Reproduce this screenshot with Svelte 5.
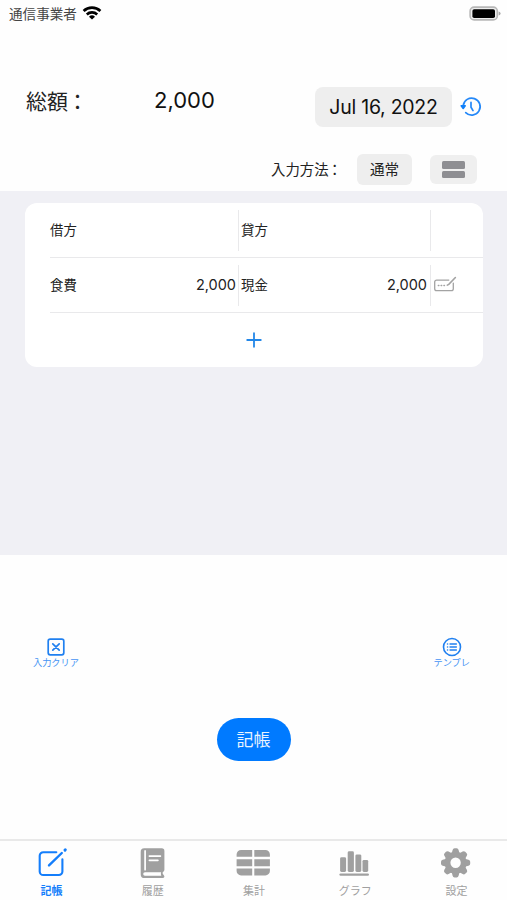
<script lang="ts">
	type Tab = { id: string; label: string };

	const tabs: Tab[] = [
		{ id: 'entry', label: '記帳' },
		{ id: 'history', label: '履歴' },
		{ id: 'summary', label: '集計' },
		{ id: 'graph', label: 'グラフ' },
		{ id: 'settings', label: '設定' }
	];

	const teeth = [0, 45, 90, 135, 180, 225, 270, 315];

	let activeTab = $state('entry');
	let entries = $state([{ debit: '食費', debitAmount: 2000, credit: '現金', creditAmount: 2000 }]);
	let total = $derived(entries.reduce((sum, entry) => sum + entry.debitAmount, 0));

	function formatAmount(value: number) {
		return value.toLocaleString('en-US');
	}

	function addEntry() {
		entries.push({ debit: '', debitAmount: 0, credit: '', creditAmount: 0 });
	}

	function clearEntries() {
		entries = [];
	}
</script>

<div class="screen">
	<div class="status-bar">
		<span class="carrier">通信事業者</span>
		<svg class="wifi" width="20" height="14" viewBox="0 0 20 14" fill="none" stroke="#000" stroke-width="2.7">
			<path d="M1.6 4.9a12.3 12.3 0 0 1 16.8 0" />
			<path d="M4.8 8.4a7.7 7.7 0 0 1 10.4 0" />
			<path d="M10 13.6l-3-2.9a4.3 4.3 0 0 1 6 0z" fill="#000" stroke="none" />
		</svg>
		<svg class="battery" width="32" height="15" viewBox="0 0 32 15">
			<rect x="1.1" y="1.1" width="27.2" height="12.8" rx="4" fill="#eee" stroke="#b8b8b8" stroke-width="1.6" />
			<rect x="3.4" y="3.2" width="22.6" height="8.8" rx="1.8" fill="#000" />
			<path d="M29.6 5.4q2 .6 2 2.1t-2 2.1z" fill="#aaa" />
		</svg>
	</div>

	<header class="summary">
		<div class="total-row">
			<span class="total-label">総額<span class="colon">：</span></span>
			<span class="total-value">{formatAmount(total)}</span>
			<button type="button" class="date-button">Jul 16, 2022</button>
			<button type="button" class="plain-button" aria-label="日付履歴">
				<svg width="22" height="22" viewBox="0 0 22 22" fill="none" stroke="#2488f8" stroke-width="1.7" stroke-linecap="round">
					<path d="M3.2 9.6a8.5 8.5 0 1 1 2.5 7.1" />
					<path d="M1.2 9.8h4l-2 2.6z" fill="#1080fa" stroke="#1080fa" stroke-width="1.6" stroke-linejoin="round" />
					<path d="M11 6.4v4.8l2 3.4" />
				</svg>
			</button>
		</div>
		<div class="method-row">
			<span class="method-label">入力方法<span class="colon">：</span></span>
			<button type="button" class="method-button">通常</button>
			<button type="button" class="layout-button" aria-label="表示切替">
				<span class="layout-bar"></span>
				<span class="layout-bar"></span>
			</button>
		</div>
	</header>

	<main class="ledger">
		<div class="card">
			<div class="row">
				<div class="cell"><span>借方</span></div>
				<div class="cell credit"><span>貸方</span></div>
				<div class="cell action"></div>
			</div>
			{#each entries as entry}
				<div class="row">
					<div class="cell">
						<span>{entry.debit}</span>
						<span class="amount">{formatAmount(entry.debitAmount)}</span>
					</div>
					<div class="cell credit">
						<span>{entry.credit}</span>
						<span class="amount">{formatAmount(entry.creditAmount)}</span>
					</div>
					<div class="cell action">
						<svg width="23" height="16" viewBox="0 0 23 16" fill="none" stroke="#a3a3a3" stroke-width="1.3" stroke-linecap="round">
							<path d="M14.8 4.1H2.6A1.9 1.9 0 0 0 .7 6v6.8a1.9 1.9 0 0 0 1.9 1.9h14.8a1.9 1.9 0 0 0 1.9-1.9V7.1" />
							<path d="M21.4 1.5l-6.6 6.9-1.5.7" stroke-width="1.6" />
							<path d="M4.3 9.5h.6M7.1 9.5h.6M9.9 9.5h.6" stroke-width="1.4" />
						</svg>
					</div>
				</div>
			{/each}
			<button type="button" class="add-row" onclick={addEntry} aria-label="行を追加">
				<svg width="16" height="16" viewBox="0 0 16 16" stroke="#2387e8" stroke-width="1.8" stroke-linecap="round">
					<path d="M8 1.2v13.6M1.2 8h13.6" />
				</svg>
			</button>
		</div>
	</main>

	<section class="actions">
		<div class="tools">
			<button type="button" class="tool" onclick={clearEntries}>
				<svg width="20" height="20" viewBox="0 0 20 20" fill="none" stroke="#2080f0" stroke-width="1.7" stroke-linecap="round">
					<rect x="2.2" y="2.2" width="15.6" height="15.6" rx="2" />
					<path d="M6.8 6.8l6.4 6.4M13.2 6.8l-6.4 6.4" />
				</svg>
				入力クリア
			</button>
			<button type="button" class="tool">
				<svg width="20" height="20" viewBox="0 0 20 20" fill="none" stroke="#2080f0" stroke-linecap="round">
					<circle cx="10" cy="10" r="8.5" stroke-width="1.6" />
					<path d="M8 7h6.4M8 10h6.4M8 13h6.4" stroke-width="1.3" />
					<path d="M5.5 7h.1M5.5 10h.1M5.5 13h.1" stroke-width="1.5" />
				</svg>
				テンプレ
			</button>
		</div>
		<button type="button" class="submit">記帳</button>
	</section>

	<nav class="tab-bar">
		{#each tabs as tab}
			<button type="button" class="tab" class:active={activeTab === tab.id} onclick={() => (activeTab = tab.id)}>
				<svg width="36" height="32" viewBox="0 0 36 32" fill="currentColor">
					{#if tab.id === 'entry'}
						<g fill="none" stroke="currentColor" stroke-width="2.1" stroke-linecap="round">
							<path d="M22.3 5.2H9.3a3.6 3.6 0 0 0-3.6 3.6v15.6a3.6 3.6 0 0 0 3.6 3.6h15.5a3.6 3.6 0 0 0 3.6-3.6V12.3" />
							<path d="M15 18.4L27.8 6" stroke-width="2.4" />
							<path d="M31 3.1l.3-.3" stroke-width="3" />
						</g>
					{:else if tab.id === 'history'}
						<path d="M9.2 1.3h17.6a2.6 2.6 0 0 1 2.6 2.6v18.9a2.4 2.4 0 0 1-1.6 2.2q-.7 1.5.8 3.1c1.4 1 .9 3-1 3H9.6a3.9 3.9 0 0 1-3.9-3.9V4.9a3.5 3.5 0 0 1 3.5-3.6z" />
						<path d="M10.1 3.9v18.8M14.4 9.1h11M14.4 13.3h8.5" fill="none" stroke="#fff" stroke-width="1.7" stroke-linecap="round" />
						<path d="M26.1 25.2H10a1.8 1.8 0 0 0 0 3.6h16.3q-.8-1.9-.2-3.6z" fill="#fff" />
					{:else if tab.id === 'summary'}
						<path d="M5.1 3h11.1v6.8H.6V7.5A4.5 4.5 0 0 1 5.1 3zM18.3 3h11.1a4.5 4.5 0 0 1 4.5 4.5v2.3H18.3zM.6 12.2h15.6v7H.6zM18.3 12.2h15.6v7H18.3zM.6 21.5h15.6v6.9H5.1a4.5 4.5 0 0 1-4.5-4.5zM18.3 21.5h15.6v2.4a4.5 4.5 0 0 1-4.5 4.5H18.3z" />
					{:else if tab.id === 'graph'}
						<rect x="3.1" y="10.3" width="6" height="14.7" rx="1.4" />
						<rect x="10.7" y="4.3" width="6.2" height="20.7" rx="1.4" />
						<rect x="18.4" y="7.4" width="5.9" height="17.6" rx="1.4" />
						<rect x="25.5" y="12.9" width="5.7" height="12.1" rx="1.4" />
						<rect x="2.4" y="26.4" width="29.6" height="2.4" rx="1.2" />
					{:else}
						<circle cx="17.6" cy="15.8" r="8.1" fill="none" stroke="currentColor" stroke-width="5.8" />
						{#each teeth as angle}
							<path d="M13.6 6.8l1-3.9q.4-1.7 2-1.7h2q1.6 0 2 1.7l1 3.9z" transform="rotate({angle} 17.6 15.8)" />
						{/each}
					{/if}
				</svg>
				<span>{tab.label}</span>
			</button>
		{/each}
	</nav>
</div>

<style>
	:global(body) {
		margin: 0;
		background: #fff;
	}

	.screen {
		display: flex;
		flex-direction: column;
		height: 900px;
		width: 507px;
		overflow: hidden;
		background: #fefefe;
		color: #222;
		font-family: Inter, 'Noto Sans CJK JP', sans-serif;
	}

	button {
		border: none;
		margin: 0;
		padding: 0;
		background: transparent;
		color: inherit;
		font-family: inherit;
		cursor: pointer;
	}

	svg {
		display: block;
		flex-shrink: 0;
	}

	.status-bar {
		display: flex;
		align-items: center;
		height: 27px;
		padding: 0 6px 0 9px;
		box-sizing: border-box;
	}

	.carrier {
		font-size: 13.6px;
		line-height: 20px;
		color: #444;
	}

	.wifi {
		margin: -2px 0 0 5px;
	}

	.battery {
		margin: -1px 0 0 auto;
	}

	.summary {
		height: 164px;
		box-sizing: border-box;
		padding: 60px 24px 0 26px;
	}

	.total-row {
		display: flex;
		align-items: center;
		height: 40px;
		padding-right: 1px;
	}

	.total-label {
		width: 128px;
		margin-top: -15px;
		font-size: 21px;
		white-space: nowrap;
	}

	.colon {
		position: relative;
		left: -1px;
	}

	.total-value {
		margin-top: -14px;
		font-size: 22px;
		color: #111;
	}

	.date-button {
		width: 137px;
		height: 40px;
		margin-left: auto;
		border-radius: 8px;
		background: #eee;
		color: #111;
		font-size: 19.5px;
		letter-spacing: -0.25px;
		white-space: nowrap;
	}

	.plain-button {
		margin-left: 8px;
	}

	.method-row {
		display: flex;
		align-items: center;
		justify-content: flex-end;
		height: 31px;
		margin-top: 27px;
		padding-right: 6px;
	}

	.method-label {
		width: 86px;
		margin-top: -2px;
		font-size: 14.4px;
		white-space: nowrap;
	}

	.method-button {
		width: 55px;
		height: 31px;
		padding-bottom: 2px;
		border-radius: 6px;
		background: #eee;
		font-size: 14.6px;
	}

	.layout-button {
		display: flex;
		flex-direction: column;
		align-items: center;
		justify-content: center;
		gap: 2px;
		width: 47px;
		height: 29px;
		margin-left: 18px;
		border-radius: 6px;
		background: #efefef;
	}

	.layout-bar {
		width: 23px;
		height: 7.5px;
		border-radius: 1.5px;
		background: #8e8e92;
	}

	.ledger {
		height: 364px;
		box-sizing: border-box;
		padding: 12px 24px 0 25px;
		background: #f0f0f5;
	}

	.card {
		padding-left: 25px;
		border-radius: 12px;
		background: #fff;
	}

	.row {
		display: flex;
		align-items: center;
		height: 55px;
		box-sizing: border-box;
		border-bottom: 1px solid #e9e9eb;
	}

	.cell {
		display: flex;
		align-items: center;
		justify-content: space-between;
		width: 188px;
		height: 41px;
		padding: 0 2px 2px 0;
		box-sizing: border-box;
		font-size: 13.4px;
	}

	.cell.credit {
		width: 192px;
		padding-left: 2px;
		padding-right: 3px;
		border-left: 1px solid #e9e9eb;
	}

	.cell.action {
		width: 53px;
		padding-left: 3px;
		border-left: 1px solid #e9e9eb;
	}

	.amount {
		font-size: 14.5px;
	}

	.add-row {
		display: flex;
		align-items: center;
		justify-content: center;
		width: 100%;
		height: 54px;
		padding-right: 25px;
	}

	.actions {
		display: flex;
		flex-direction: column;
		align-items: center;
		flex: 1;
		padding-top: 82px;
	}

	.tools {
		display: flex;
		justify-content: space-between;
		width: 100%;
		height: 81px;
		padding: 0 37px 0 33px;
		box-sizing: border-box;
	}

	.tool {
		display: flex;
		flex-direction: column;
		align-items: center;
		height: 32px;
		color: #4694f4;
		font-size: 9.2px;
		line-height: 12px;
	}

	.submit {
		width: 74px;
		height: 43px;
		padding-bottom: 2px;
		border-radius: 22px;
		background: #007aff;
		color: #e8f3ff;
		font-size: 17px;
	}

	.tab-bar {
		display: grid;
		grid-template-columns: repeat(5, 1fr);
		height: 61px;
		box-sizing: border-box;
		padding-left: 1px;
		border-top: 2px solid #e9e9e9;
	}

	.tab {
		display: flex;
		flex-direction: column;
		align-items: center;
		padding-top: 6px;
		color: #a0a0a0;
		font-size: 11px;
		line-height: 16px;
	}

	.tab span {
		margin-top: 4px;
	}

	.tab.active {
		color: #147efb;
		font-weight: 700;
	}
</style>
